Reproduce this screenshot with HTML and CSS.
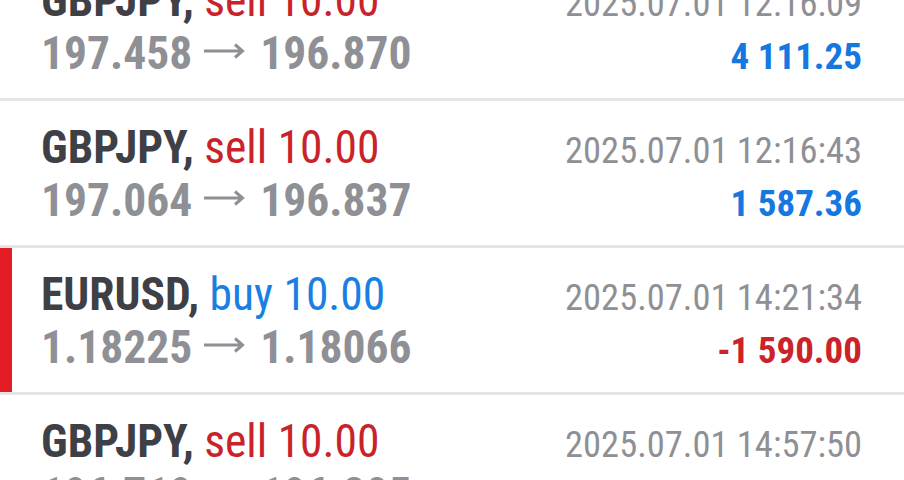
FILE: index.html
```html
<!DOCTYPE html>
<html>
<head>
<meta charset="utf-8">
<link rel="stylesheet" href="styles.css">
</head>
<body>
<div class="list">
  <div class="row">
    <div class="main">
      <div class="title"><span class="sym">GBPJPY,</span> <span class="sell">sell 10.00</span></div>
      <div class="prices"><span class="num">197.458</span><svg class="arrow" width="42" height="16" viewBox="0 0 42 16"><path d="M1 8H39M32 1.5L39.5 8L32 14.5"/></svg><span class="num">196.870</span></div>
    </div>
    <div class="side">
      <div class="time">2025.07.01 12:16:09</div>
      <div class="profit pos">4 111.25</div>
    </div>
  </div>
  <div class="row">
    <div class="main">
      <div class="title"><span class="sym">GBPJPY,</span> <span class="sell">sell 10.00</span></div>
      <div class="prices"><span class="num">197.064</span><svg class="arrow" width="42" height="16" viewBox="0 0 42 16"><path d="M1 8H39M32 1.5L39.5 8L32 14.5"/></svg><span class="num">196.837</span></div>
    </div>
    <div class="side">
      <div class="time">2025.07.01 12:16:43</div>
      <div class="profit pos">1 587.36</div>
    </div>
  </div>
  <div class="row loss">
    <div class="main">
      <div class="title"><span class="sym">EURUSD,</span> <span class="buy">buy 10.00</span></div>
      <div class="prices"><span class="num">1.18225</span><svg class="arrow" width="42" height="16" viewBox="0 0 42 16"><path d="M1 8H39M32 1.5L39.5 8L32 14.5"/></svg><span class="num">1.18066</span></div>
    </div>
    <div class="side">
      <div class="time">2025.07.01 14:21:34</div>
      <div class="profit neg">-1 590.00</div>
    </div>
  </div>
  <div class="row">
    <div class="main">
      <div class="title"><span class="sym">GBPJPY,</span> <span class="sell">sell 10.00</span></div>
      <div class="prices"><span class="num">196.719</span><svg class="arrow" width="42" height="16" viewBox="0 0 42 16"><path d="M1 8H39M32 1.5L39.5 8L32 14.5"/></svg><span class="num">196.805</span></div>
    </div>
    <div class="side">
      <div class="time">2025.07.01 14:57:50</div>
      <div class="profit neg">-1 020.00</div>
    </div>
  </div>
</div>
</body>
</html>
```
FILE: styles.css
```css
html, body {
  margin: 0;
  padding: 0;
  background: #ffffff;
}
body {
  font-family: "Roboto Condensed", Roboto, "Liberation Sans", sans-serif;
  font-stretch: condensed;
  overflow: hidden;
  height: 480px;
}
.list {
  margin-top: -46px;
}
.row {
  height: 147px;
  box-sizing: border-box;
  border-bottom: 3px solid #e4e4e4;
  display: flex;
  justify-content: space-between;
  align-items: baseline;
  padding: 20px 42px 0 41px;
}
.row.loss {
  box-shadow: inset 12px 0 0 #e31d23;
}
.main, .side {
  display: flex;
  flex-direction: column;
}
.side {
  align-items: flex-end;
}
.title {
  font-size: 45.5px;
  line-height: 53px;
  white-space: nowrap;
}
.sym {
  font-weight: 700;
  color: #3f4046;
}
.sell {
  color: #c8232a;
}
.buy {
  color: #1a7fe3;
}
.prices {
  font-size: 45.5px;
  line-height: 53px;
  color: #8f9095;
  white-space: nowrap;
}
.num {
  font-weight: 700;
}
.arrow {
  vertical-align: 10px;
  margin: 0 15px 0 11px;
  fill: none;
  stroke: #8f9095;
  stroke-width: 3;
}
.time {
  font-size: 36.5px;
  line-height: 53px;
  color: #8f9095;
  white-space: nowrap;
}
.profit {
  font-size: 37px;
  line-height: 53px;
  font-weight: 700;
  white-space: nowrap;
}
.pos {
  color: #1478e0;
}
.neg {
  color: #cc2229;
}
```
